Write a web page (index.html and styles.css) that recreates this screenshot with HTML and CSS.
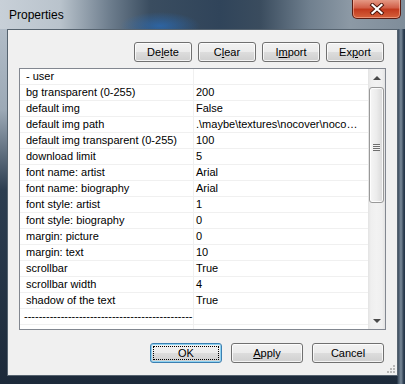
FILE: index.html
```html
<!DOCTYPE html>
<html lang="en">
<head>
    <meta charset="UTF-8">
    <title>Properties</title>
    <link rel="stylesheet" href="styles.css">
</head>
<body>
    <div class="window">
        <div class="titlebar">
            <span class="title">Properties</span>
            <div class="close">
                <svg width="20" height="12" viewBox="0 0 20 12">
                    <path d="M5.5 2 L14.5 10 M14.5 2 L5.5 10" stroke="#4a1208" stroke-width="4" stroke-linecap="square"/>
                    <path d="M5.5 2 L14.5 10 M14.5 2 L5.5 10" stroke="#ffffff" stroke-width="2.2" stroke-linecap="square"/>
                </svg>
            </div>
        </div>
        <div class="client">
            <div class="toolbar">
                <button class="btn small">De<u>l</u>ete</button>
                <button class="btn small">C<u>l</u>ear</button>
                <button class="btn small">I<u>m</u>port</button>
                <button class="btn small">Ex<u>p</u>ort</button>
            </div>
            <div class="list">
                <div class="rows">
                    <div class="row"><span class="key">- user</span><span class="val"></span></div>
                    <div class="row"><span class="key">bg transparent (0-255)</span><span class="val">200</span></div>
                    <div class="row"><span class="key">default img</span><span class="val">False</span></div>
                    <div class="row"><span class="key">default img path</span><span class="val">.\maybe\textures\nocover\noco…</span></div>
                    <div class="row"><span class="key">default img transparent (0-255)</span><span class="val">100</span></div>
                    <div class="row"><span class="key">download limit</span><span class="val">5</span></div>
                    <div class="row"><span class="key">font name: artist</span><span class="val">Arial</span></div>
                    <div class="row"><span class="key">font name: biography</span><span class="val">Arial</span></div>
                    <div class="row"><span class="key">font style: artist</span><span class="val">1</span></div>
                    <div class="row"><span class="key">font style: biography</span><span class="val">0</span></div>
                    <div class="row"><span class="key">margin: picture</span><span class="val">0</span></div>
                    <div class="row"><span class="key">margin: text</span><span class="val">10</span></div>
                    <div class="row"><span class="key">scrollbar</span><span class="val">True</span></div>
                    <div class="row"><span class="key">scrollbar width</span><span class="val">4</span></div>
                    <div class="row"><span class="key">shadow of the text</span><span class="val">True</span></div>
                    <div class="row"><span class="key dashes">----------------------------------------------</span><span class="val"></span></div>
                    <div class="row"><span class="key"></span><span class="val"></span></div>
                </div>
                <div class="scrollbar">
                    <div class="arrow"><span class="tri up"></span></div>
                    <div class="track">
                        <div class="thumb"><span class="grip"></span></div>
                    </div>
                    <div class="arrow"><span class="tri down"></span></div>
                </div>
            </div>
            <div class="footer">
                <button class="btn wide default">OK</button>
                <button class="btn wide"><u>A</u>pply</button>
                <button class="btn wide">Cancel</button>
            </div>
            <svg class="sizegrip" width="10" height="10" viewBox="0 0 10 10">
                <rect x="7" y="1" width="2" height="2" fill="#b8b8b8"/>
                <rect x="4" y="4" width="2" height="2" fill="#b8b8b8"/>
                <rect x="7" y="4" width="2" height="2" fill="#b8b8b8"/>
                <rect x="1" y="7" width="2" height="2" fill="#b8b8b8"/>
                <rect x="4" y="7" width="2" height="2" fill="#b8b8b8"/>
                <rect x="7" y="7" width="2" height="2" fill="#b8b8b8"/>
            </svg>
        </div>
    </div>
</body>
</html>
```

FILE: styles.css
```css
body {
    margin: 0;
    font-family: "Liberation Sans", Arial, sans-serif;
    font-size: 11px;
    color: #000;
}
.window {
    width: 405px;
    height: 384px;
    box-sizing: border-box;
    display: flex;
    flex-direction: column;
    padding: 0 7px 8px 7px;
    background:
        linear-gradient(90deg, rgba(0,0,0,0) 0, rgba(0,0,0,0) 397px, #3d4e60 398px, #7a8a9a 401px, #26374a 404px),
        linear-gradient(180deg, #b9c3cd 0, #9ca9b6 110px, #2c3d50 190px, #1d2a3a 100%);
}
.titlebar {
    height: 29px;
    margin: 0 -7px;
    padding: 0 4px 0 9px;
    display: flex;
    align-items: flex-start;
    justify-content: space-between;
    background:
        radial-gradient(ellipse 40px 14px at 160px 26px, rgba(40,110,190,0.7), rgba(40,110,190,0)),
        linear-gradient(90deg, #c8d0d8 0, #b9c3cc 60px, #6d7d8d 110px, #3a4d60 150px, #30445a 220px, #3a4c5e 260px, #70808f 310px, #8c99a5 350px, #7f8d9a 405px);
}
.title {
    font-size: 12px;
    line-height: 12px;
    margin-top: 9px;
}
.close {
    width: 49px;
    height: 20px;
    box-sizing: border-box;
    margin-top: -1px;
    border: 1px solid #5a1c12;
    border-top: none;
    border-radius: 0 0 5px 5px;
    background: linear-gradient(180deg, #e7a08c 0, #d2614a 45%, #c23a1e 55%, #d6613c 100%);
    box-shadow: inset 0 0 0 1px rgba(255,200,180,0.5);
    display: flex;
    align-items: center;
    justify-content: center;
}
.client {
    flex: 1;
    background: #f0f0f0;
    border: 1px solid #56636f;
    display: flex;
    flex-direction: column;
    position: relative;
}
.toolbar {
    display: flex;
    justify-content: flex-end;
    gap: 6px;
    padding: 12px 13px 0 0;
}
.btn {
    box-sizing: border-box;
    height: 20px;
    padding: 0;
    border: 1px solid #707070;
    border-radius: 3px;
    background: linear-gradient(180deg, #f2f2f2 0%, #ebebeb 50%, #dddddd 50%, #cfcfcf 100%);
    box-shadow: inset 0 0 0 1px rgba(255,255,255,0.75);
    font-family: "Liberation Sans", Arial, sans-serif;
    font-size: 11px;
    color: #000;
    position: relative;
}
.btn u {
    text-underline-offset: 1px;
}
.small {
    width: 58px;
}
.wide {
    width: 72px;
}
.default {
    border-color: #3c7fb1;
    box-shadow: inset 0 0 0 1px #8fd3f2;
}
.default::after {
    content: "";
    position: absolute;
    inset: 2px;
    border: 1px dotted #000;
}
.list {
    margin: 6px 11px 0 11px;
    height: 262px;
    box-sizing: border-box;
    border: 1px solid #828790;
    background: #fff;
    display: flex;
}
.rows {
    flex: 1;
    overflow: hidden;
}
.row {
    display: flex;
    height: 16px;
    box-sizing: border-box;
    border-bottom: 1px solid #f0f0f0;
    line-height: 15px;
    white-space: nowrap;
}
.key {
    width: 174px;
    flex: none;
    padding-left: 6px;
    box-sizing: border-box;
    border-right: 1px solid #f0f0f0;
}
.dashes {
    padding-left: 4px;
}
.val {
    flex: 1;
    padding-left: 2px;
}
.scrollbar {
    width: 17px;
    flex: none;
    display: flex;
    flex-direction: column;
    background: linear-gradient(90deg, #e3e3e3 0, #efefef 3px, #f2f2f2 50%, #efefef 14px, #e3e3e3 100%);
}
.arrow {
    height: 17px;
    display: flex;
    align-items: center;
    justify-content: center;
}
.tri {
    width: 0;
    height: 0;
    border-left: 4px solid transparent;
    border-right: 4px solid transparent;
}
.tri.up {
    border-bottom: 4px solid #4a4a4a;
}
.tri.down {
    border-top: 4px solid #4a4a4a;
}
.track {
    flex: 1;
    padding-top: 1px;
}
.thumb {
    height: 116px;
    margin: 0 1px;
    box-sizing: border-box;
    border: 1px solid #999;
    border-radius: 3px;
    background: linear-gradient(90deg, #f6f6f6 0, #ececec 50%, #d8d8d8 100%);
    box-shadow: inset 0 0 0 1px rgba(255,255,255,0.8);
    display: flex;
    align-items: center;
    justify-content: center;
}
.grip {
    width: 7px;
    height: 7px;
    background: repeating-linear-gradient(180deg, #6e6e6e 0, #6e6e6e 1px, #f4f4f4 1px, #f4f4f4 2px);
    margin-top: 4px;
}
.footer {
    display: flex;
    justify-content: flex-end;
    gap: 9px;
    padding: 13px 13px 0 0;
}
.sizegrip {
    position: absolute;
    right: 1px;
    bottom: 1px;
}
```
